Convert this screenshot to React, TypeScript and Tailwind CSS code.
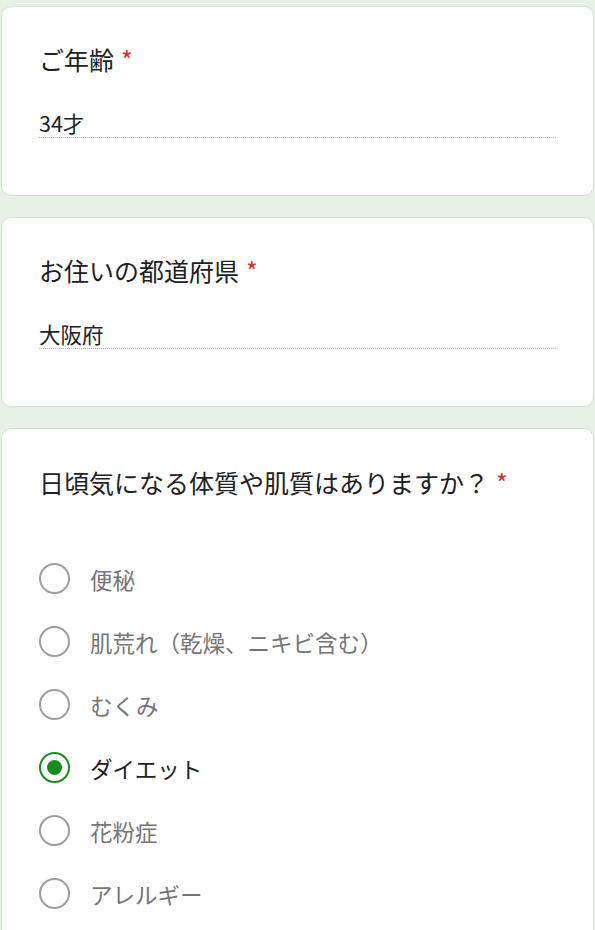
import React from 'react';

const font = { fontFamily: '"Noto Sans CJK JP", "Noto Sans", sans-serif' };

function Required() {
  return <span className="ml-[7px] text-[#d93025]">*</span>;
}

function TextQuestion({ title, value }: { title: string; value: string }) {
  return (
    <div className="rounded-[10px] border border-[#dadce0] bg-white pl-[37px] pr-[37px] pt-[36px] pb-[57px]">
      <div className="text-[25px] leading-[32px] text-[#202124]">
        {title}
        <Required />
      </div>
      <div className="mt-[34px] border-b border-dotted border-[#b8b8b8] text-[21.5px] leading-[28px] text-[#202124]">
        {value}
      </div>
    </div>
  );
}

export default function App() {
  const options = ['便秘', '肌荒れ（乾燥、ニキビ含む）', 'むくみ', 'ダイエット', '花粉症', 'アレルギー'];
  const selected = 'ダイエット';

  return (
    <div className="min-h-screen bg-[#e6f3e4] px-px pt-[6px]" style={font}>
      <div className="flex flex-col gap-[21px]">
        <TextQuestion title="ご年齢" value="34才" />
        <TextQuestion title="お住いの都道府県" value="大阪府" />

        {/* single choice question */}
        <div className="rounded-[10px] border border-[#dadce0] bg-white pl-[37px] pr-[37px] pt-[37px] pb-[40px]">
          <div className="text-[25px] leading-[32px] text-[#202124]">
            日頃気になる体質や肌質はありますか？
            <Required />
          </div>
          <div className="mt-[49px] flex flex-col">
            {options.map((opt) => {
              const on = opt === selected;
              return (
                <div key={opt} className="flex h-[63px] items-center gap-[20px]">
                  <div
                    className={
                      on
                        ? 'flex h-[31px] w-[31px] items-center justify-center rounded-full border-[2.5px] border-[#188a1e]'
                        : 'h-[31px] w-[31px] rounded-full border-[2.5px] border-[#9e9e9e]'
                    }
                  >
                    {on && <div className="h-[15px] w-[15px] rounded-full bg-[#188a1e]" />}
                  </div>
                  <span
                    className={
                      on
                        ? 'text-[22.5px] leading-[30px] text-[#202124]'
                        : 'text-[22.5px] leading-[30px] text-[#757575]'
                    }
                  >
                    {opt}
                  </span>
                </div>
              );
            })}
          </div>
        </div>
      </div>
    </div>
  );
}
